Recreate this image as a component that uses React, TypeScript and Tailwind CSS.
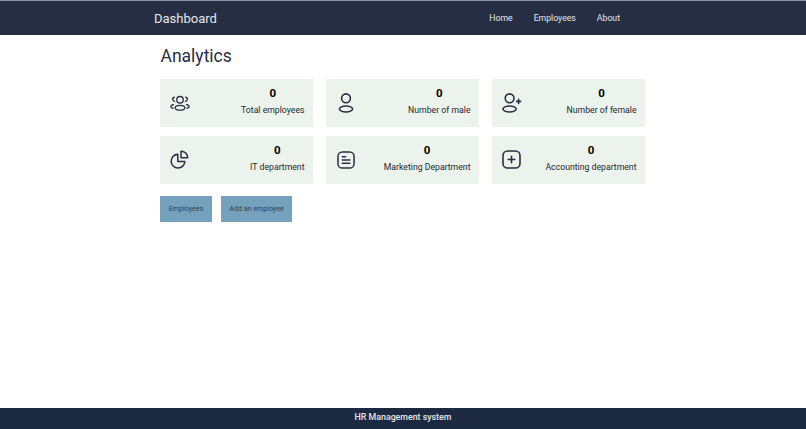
import React from 'react';

const stroke = { fill: 'none', stroke: '#2b3042', strokeWidth: 1.6, strokeLinecap: 'round' as const, strokeLinejoin: 'round' as const };

const icons: Record<string, React.ReactNode> = {
  users: (
    <svg width="20" height="16" viewBox="0 0 24 19" {...stroke}>
      <circle cx="12" cy="5.6" r="3.9" />
      <ellipse cx="12" cy="15.2" rx="5.8" ry="2.9" />
      <path d="M5.2 2.4c-1.6.5-2.2 2-1.8 3.3.3 1 1 1.7 2 1.9" />
      <path d="M18.8 2.4c1.6.5 2.2 2 1.8 3.3-.3 1-1 1.7-2 1.9" />
      <path d="M4.2 11.4c-2 .3-3.2 1.3-3.2 2.3 0 .9.9 1.7 2.4 2.1" />
      <path d="M19.8 11.4c2 .3 3.2 1.3 3.2 2.3 0 .9-.9 1.7-2.4 2.1" />
    </svg>
  ),
  user: (
    <svg width="16" height="20" viewBox="0 0 16 20" {...stroke}>
      <circle cx="8" cy="5.3" r="4.4" />
      <ellipse cx="8" cy="16" rx="6.6" ry="3" />
    </svg>
  ),
  userPlus: (
    <svg width="20" height="20" viewBox="0 0 20 20" {...stroke}>
      <circle cx="7.6" cy="5.3" r="4.4" />
      <ellipse cx="7.6" cy="16" rx="6.6" ry="3" />
      <path d="M16.6 6.4v4M14.6 8.4h4" />
    </svg>
  ),
  pie: (
    <svg width="19" height="19" viewBox="0 0 20 20" {...stroke}>
      <path d="M8.2 4.6A7.2 7.2 0 1 0 15.6 12H8.2V4.6Z" />
      <path d="M11.6 1.2a6.9 6.9 0 0 1 7 7h-7v-7Z" />
    </svg>
  ),
  note: (
    <svg width="18" height="18" viewBox="0 0 19 19" {...stroke}>
      <rect x="1" y="1" width="17" height="17" rx="4.6" />
      <path d="M5.6 6h3.4M5.6 9.5h8M5.6 13h8" />
    </svg>
  ),
  plus: (
    <svg width="19" height="19" viewBox="0 0 19 19" {...stroke}>
      <rect x="1" y="1" width="17" height="17" rx="4.6" />
      <path d="M9.5 6.2v6.6M6.2 9.5h6.6" />
    </svg>
  ),
};

const cards = [
  { icon: 'users', label: 'Total employees' },
  { icon: 'user', label: 'Number of male' },
  { icon: 'userPlus', label: 'Number of female' },
  { icon: 'pie', label: 'IT department' },
  { icon: 'note', label: 'Marketing Department' },
  { icon: 'plus', label: 'Accounting department' },
];

const App: React.FC = () => {
  return (
    <div className="h-[429px] flex flex-col bg-white font-['Roboto',sans-serif] overflow-hidden">
      <header className="h-[35px] bg-[#252e42] border-t border-t-[#8d929c] text-[#e6e8ec]">
        <nav className="w-[466px] ml-[154px] h-full flex items-center justify-between">
          <span className="text-[13px] leading-none">Dashboard</span>
          <ul className="flex gap-[21px] pt-[2px] text-[8.7px]">
            <li>Home</li>
            <li>Employees</li>
            <li>About</li>
          </ul>
        </nav>
      </header>

      <main className="flex-1 w-[485px] ml-[160px]">
        <h1 className="mt-[9px] pl-[0.5px] text-[17.5px] leading-[25px] text-[#252e42]">Analytics</h1>

        <div className="mt-[10px] grid grid-cols-3 gap-x-[13px] gap-y-[9px]">
          {cards.map((card) => (
            <div key={card.label} className="h-[48px] bg-[#ebf3ec] px-[8.5px] flex items-center justify-between">
              <span className="w-[22px] flex justify-center -mt-[1px]">{icons[card.icon]}</span>
              <div className="text-center pb-[3px]">
                <div className="text-[11.5px] leading-[14px] font-bold text-black">0</div>
                <div className="mt-[3px] text-[8.7px] leading-[14px] text-[#24282c]">{card.label}</div>
              </div>
            </div>
          ))}
        </div>

        <div className="mt-[12px] flex gap-[9px]">
          <button className="w-[52px] h-[26px] pt-[1px] bg-[#75a1bd] text-[7.1px] font-['Roboto',sans-serif] text-[#2e4352]">Employees</button>
          <button className="w-[71px] h-[26px] pt-[1px] bg-[#75a1bd] text-[7.1px] font-['Roboto',sans-serif] text-[#2e4352]">Add an employee</button>
        </div>
      </main>

      <footer className="h-[21px] bg-[#1b2a41] flex items-center justify-center pb-[2px] text-[8.8px] font-medium text-[#e6e8ec]">
        HR Management system
      </footer>
    </div>
  );
};

export default App;
